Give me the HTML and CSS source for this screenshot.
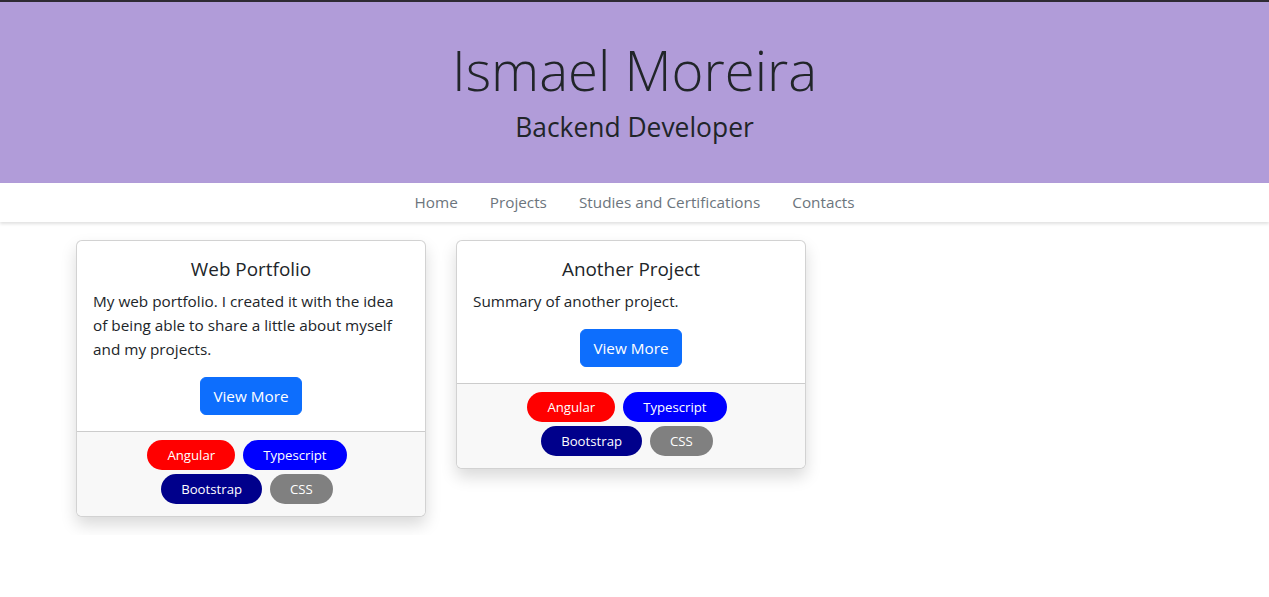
FILE: index.html
```html
<!DOCTYPE html>
<html lang="en">
<head>
    <meta charset="UTF-8">
    <title>Ismael Moreira</title>

    <link rel="stylesheet" href="styles.css">

</head>
<body>

<header id="header">
    <h1>Ismael Moreira</h1>
    <h2>Backend Developer</h2>
</header>

<nav id="nav">
    <a href="#">Home</a>
    <a href="#">Projects</a>
    <a href="#">Studies and Certifications</a>
    <a href="#">Contacts</a>
</nav>

<main id="projects">

    <div class="card">
        <div class="card_body">
            <h3>Web Portfolio</h3>
            <p>My web portfolio. I created it with the idea of being able to share a little about myself and my projects.</p>
            <a class="btn" href="#">View More</a>
        </div>
        <div class="card_footer">
            <span class="badge angular">Angular</span>
            <span class="badge typescript">Typescript</span>
            <span class="badge bootstrap">Bootstrap</span>
            <span class="badge css">CSS</span>
        </div>
    </div>

    <div class="card">
        <div class="card_body">
            <h3>Another Project</h3>
            <p>Summary of another project.</p>
            <a class="btn" href="#">View More</a>
        </div>
        <div class="card_footer">
            <span class="badge angular">Angular</span>
            <span class="badge typescript">Typescript</span>
            <span class="badge bootstrap">Bootstrap</span>
            <span class="badge css">CSS</span>
        </div>
    </div>

</main>

</body>
</html>
```

FILE: styles.css
```css
*{
    box-sizing: border-box;
}

body{
    margin: 0;
    font-family: "Open Sans", sans-serif;
    font-size: 15.3px;
    line-height: 24px;
    color: #212529;
    border-top: 2px solid #2e2a33;
}

#header{
    background-color: #b19cd9;
    text-align: center;
    padding: 35px 0 39px;
}

#header h1{
    margin: 0;
    font-size: 54.5px;
    font-weight: 300;
    line-height: 66px;
}

#header h2{
    margin: 7px 0 0;
    font-size: 26.4px;
    font-weight: 400;
    line-height: 34px;
}

#nav{
    display: flex;
    justify-content: center;
    background-color: white;
    box-shadow: 0 2px 3px rgba(0, 0, 0, 0.12);
    padding: 8px 0;
    line-height: 23px;
}

#nav a{
    color: #6c757d;
    text-decoration: none;
    padding: 0 16px;
}

#projects{
    display: flex;
    align-items: flex-start;
    gap: 30px;
    padding: 18px 76px;
}

.card{
    width: 350px;
    border: 1px solid rgba(0, 0, 0, 0.175);
    border-radius: 6px;
    box-shadow: 0 8px 16px rgba(0, 0, 0, 0.15);
    overflow: hidden;
    background-color: white;
}

.card_body{
    padding: 16px;
    text-align: center;
}

.card_body h3{
    margin: 0 0 8px;
    font-size: 18.9px;
    font-weight: 400;
    line-height: 24px;
}

.card_body p{
    margin: 0 0 16px;
    text-align: left;
}

.btn{
    display: inline-block;
    padding: 6px 12px;
    border: 1px solid #0d6efd;
    border-radius: 6px;
    background-color: #0d6efd;
    color: white;
    text-decoration: none;
}

.card_footer{
    display: flex;
    flex-wrap: wrap;
    justify-content: center;
    padding: 6px 16px 10px;
    border-top: 1px solid rgba(0, 0, 0, 0.175);
    background-color: #f8f8f8;
}

.badge{
    display: inline-block;
    margin: 2px 8px 2px 0;
    padding: 4px 20px;
    border-radius: 15px;
    font-size: 13.2px;
    line-height: 22px;
    color: white;
}

.angular{ background-color: red; }
.typescript{ background-color: blue; }
.bootstrap{ background-color: darkblue; }
.css{ background-color: grey; }
```
